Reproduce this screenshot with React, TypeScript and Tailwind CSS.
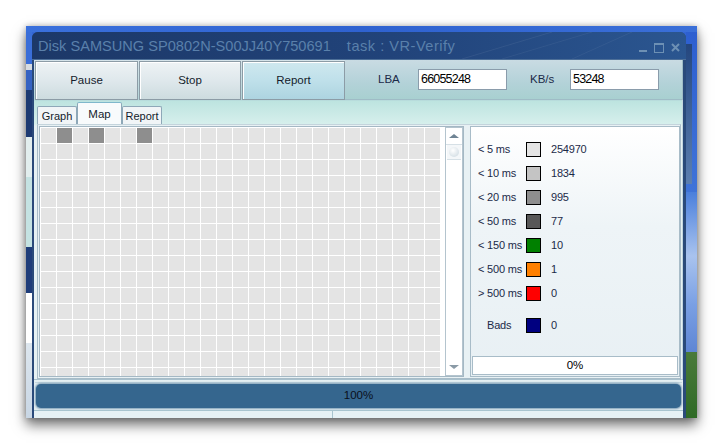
import React from "react";

const COLS = 25;
const ROWS = 16;
const DARK = new Set([1, 3, 6]);

const legend = [
  { label: "< 5 ms", color: "bg-[#e4e4e4]", value: "254970" },
  { label: "< 10 ms", color: "bg-[#c4c4c4]", value: "1834" },
  { label: "< 20 ms", color: "bg-[#8e8e8e]", value: "995" },
  { label: "< 50 ms", color: "bg-[#585858]", value: "77" },
  { label: "< 150 ms", color: "bg-[#008000]", value: "10" },
  { label: "< 500 ms", color: "bg-[#ff8000]", value: "1" },
  { label: "> 500 ms", color: "bg-[#ff0000]", value: "0" },
];

function LeftStrip() {
  return (
    <div className="flex flex-col w-[6px] shrink-0">
      <div className="h-[32px] bg-[#3a6ed8]" />
      <div className="h-[6px] bg-[#d6dce2]" />
      <div className="h-[20px] bg-[#3562c2]" />
      <div className="h-[47px] bg-[#1d3a72]" />
      <div className="h-[40px] bg-[#e2eeee]" />
      <div className="h-[70px] bg-[#c4e2e2]" />
      <div className="h-[46px] bg-[#1f3d7a]" />
      <div className="h-[15px] bg-white" />
      <div className="h-[35px] bg-white" />
      <div className="flex-1 bg-[linear-gradient(180deg,#dde6ee,#c8d6e4)]" />
    </div>
  );
}

function RightStrip() {
  return (
    <div className="flex flex-col w-[11px] shrink-0">
      <div className="h-[160px] bg-[linear-gradient(180deg,#2d5fd0,#3f73d8)] flex">
        <div className="w-[6px] mt-[12px] h-[140px] bg-[linear-gradient(180deg,#24467e,#5c7fb0)]" />
      </div>
      <div className="h-[160px] bg-[linear-gradient(180deg,#4a7fdc,#a9c3ee_40%,#7aa0e4_70%,#5f86d4)]" />
      <div className="flex-1 bg-[linear-gradient(180deg,#4a7a3a,#2f6a26)]" />
    </div>
  );
}

function Button({ label, active, w }: { label: string; active?: boolean; w: string }) {
  return (
    <div
      className={`${w} h-[39px] border border-[#8c9ca6] shadow-[inset_1px_1px_0_#ffffff] flex items-center justify-center text-[11.5px] text-[#141c2c] ${
        active
          ? "bg-[linear-gradient(180deg,#cfe8ef,#bfe0ea_50%,#add4e0)]"
          : "bg-[linear-gradient(180deg,#eef3f5,#dfe8ec_50%,#cddcdf)]"
      }`}
    >
      {label}
    </div>
  );
}

function Grid() {
  return (
    <div className="w-[404px] h-[249px] overflow-hidden bg-white pl-px pt-px">
      <div className="grid grid-cols-[repeat(25,15px)] auto-rows-[15px] gap-px">
        {Array.from({ length: COLS * ROWS }).map((_, i) => (
          <div key={i} className={i < COLS && DARK.has(i) ? "bg-[#8e8e8e]" : "bg-[#e4e4e4]"} />
        ))}
      </div>
    </div>
  );
}

function Scrollbar() {
  return (
    <div className="w-[18px] h-[249px] ml-[1px] border border-[#b4c4ce] bg-white flex flex-col">
      <div className="h-[17px] flex items-center justify-center border-b border-[#d6e0e6]">
        <div className="w-0 h-0 border-l-[5px] border-r-[5px] border-b-[4px] border-l-transparent border-r-transparent border-b-[#6f8494]" />
      </div>
      <div className="h-[15px] mx-[1px] flex items-center justify-center border-b border-[#d6e0e6] bg-[#f4f7f9]">
        <div className="w-[10px] h-[10px] rounded-full bg-[radial-gradient(circle_at_40%_35%,#ffffff,#c9d6de)]" />
      </div>
      <div className="flex-1" />
      <div className="h-[16px] flex items-center justify-center">
        <div className="w-0 h-0 border-l-[5px] border-r-[5px] border-t-[4px] border-l-transparent border-r-transparent border-t-[#8a9aa6]" />
      </div>
    </div>
  );
}

function Window() {
  return (
    <div className="w-[654px] h-[400px] shrink-0 flex flex-col rounded-t-[6px] overflow-hidden bg-[#2a4a7a]">
      {/* Title bar */}
      <div className="relative h-[28px] shrink-0 flex items-center pl-[6px] bg-[linear-gradient(90deg,#1c3868,#21437a_55%,#2b5690)] border-b border-[#4d6f98]">
        <svg className="absolute inset-0 w-full h-full" viewBox="0 0 654 28" preserveAspectRatio="none">
          <line x1="430" y1="28" x2="520" y2="0" stroke="#ffffff" strokeOpacity="0.07" strokeWidth="1" />
          <line x1="470" y1="28" x2="560" y2="0" stroke="#ffffff" strokeOpacity="0.06" strokeWidth="1" />
          <line x1="540" y1="28" x2="600" y2="0" stroke="#ffffff" strokeOpacity="0.06" strokeWidth="1" />
        </svg>
        <span className="relative text-[14.6px] text-[#5a80ab] leading-none mt-[1px]">
          Disk SAMSUNG SP0802N-S00JJ40Y750691
        </span>
        <span className="relative text-[14.6px] tracking-[0.5px] text-[#5a80ab] leading-none mt-[1px] ml-[16px]">
          task : VR-Verify
        </span>
        <div className="relative ml-auto mr-[6px] flex items-end gap-[7px] mt-[4px]">
          <div className="w-[8px] h-[2px] bg-[#6d90b4] mb-[1px]" />
          <div className="w-[10px] h-[10px] border border-[#6d90b4] border-t-2" />
          <svg width="9" height="9" viewBox="0 0 9 9" className="mb-[1px]">
            <path d="M1 1 L8 8 M8 1 L1 8" stroke="#6d90b4" strokeWidth="2" />
          </svg>
        </div>
      </div>

      {/* Body */}
      <div className="flex-1 flex ml-[2px] mr-[3px] border-r border-[#c2d6de] bg-[linear-gradient(180deg,#d6e4ea_0px,#b2d4d8_40px,#bde4e0_41px,#d6efec_64px,#e6f1f3_66px,#e6f1f3)]">
        <div className="flex-1 flex flex-col">
          {/* Toolbar */}
          <div className="h-[41px] flex pt-px pl-px shrink-0">
            <Button label="Pause" w="w-[103px]" />
            <div className="w-[1px]" />
            <Button label="Stop" w="w-[102px]" />
            <div className="w-[1px]" />
            <Button label="Report" active w="w-[103px]" />
            <div className="flex-1 h-[40px] -mt-px border-r border-b border-[#9fbcc6] flex items-center text-[11.5px] text-[#1b2a48] bg-[linear-gradient(180deg,#c9dbe3,#b3d2d8_60%,#a8d0d0)]">
              <span className="ml-[33px] w-[40px]">LBA</span>
              <div className="w-[89px] h-[21px] bg-white border border-[#8a9cab] flex items-center pl-[2px] text-[12.5px] tracking-[-0.8px] text-black">
                66055248
              </div>
              <span className="ml-[23px] w-[40px]">KB/s</span>
              <div className="w-[89px] h-[21px] bg-white border border-[#8a9cab] flex items-center pl-[2px] text-[12.5px] tracking-[-0.8px] text-black">
                53248
              </div>
            </div>
          </div>

          {/* Tabs */}
          <div className="h-[23px] flex items-end pl-[3px] shrink-0 text-[11px] text-[#141c2c]">
            <div className="w-[40px] h-[18px] border border-b-0 border-[#8ea8b8] rounded-t-[2px] bg-[#f1f5f7] flex items-center justify-center pt-px">
              Graph
            </div>
            <div className="w-[45px] h-[22px] border border-b-0 border-[#8ea8b8] border-t-[#7fb8cc] rounded-t-[2px] bg-[#f8fbfc] flex items-start justify-center pt-[3px] text-[11.5px]">
              Map
            </div>
            <div className="w-[40px] h-[18px] border border-b-0 border-[#8ea8b8] rounded-t-[2px] bg-[#f1f5f7] flex items-center justify-center pt-px">
              Report
            </div>
          </div>

          {/* Content */}
          <div className="h-[255px] shrink-0 flex ml-[3px] mr-[2px] border border-[#a8bcc8] border-t-[#c4d4dc] bg-[#e8f1f4]">
            <div className="flex ml-[1px] mt-[1px] h-[251px] border border-[#a4b8c4] bg-white">
              <Grid />
              <Scrollbar />
            </div>
            <div className="ml-[6px] mt-[1px] w-[210px] h-[251px] border border-[#a8bcc8] flex flex-col bg-[linear-gradient(180deg,#ffffff,#eef4f7_40%,#e8f0f4)]">
              <div className="flex-1 flex flex-col pt-[10px] pl-[7px] text-[11px] tracking-[-0.2px] text-[#1b2a48]">
                {legend.map((r) => (
                  <div key={r.label} className="h-[24px] flex items-center">
                    <span className="w-[48px] whitespace-nowrap">{r.label}</span>
                    <div className={`w-[15px] h-[15px] border border-black ${r.color}`} />
                    <span className="ml-[10px]">{r.value}</span>
                  </div>
                ))}
                <div className="h-[24px] mt-[8px] flex items-center">
                  <span className="w-[48px] pl-[9px] whitespace-nowrap">Bads</span>
                  <div className="w-[15px] h-[15px] border border-black bg-[#000080]" />
                  <span className="ml-[10px]">0</span>
                </div>
              </div>
              <div className="h-[19px] mx-[1px] mb-[1px] bg-white border border-[#a8bcc8] flex items-center justify-center text-[11.5px] text-black">
                0%
              </div>
            </div>
          </div>

          {/* Progress */}
          <div className="h-[31px] shrink-0 flex flex-col pt-[2px] px-[1px] border-t border-[#a8c0cc] bg-[#e4eff2]">
            <div className="h-[2px] border-t border-[#c6d8e0]" />
            <div className="h-[24px] mx-[1px] rounded-[5px] bg-[#35668e] shadow-[0_0_2px_1px_rgba(53,102,142,0.6)] flex items-center justify-center text-[11.5px] text-[#0a0f1a]">
              100%
            </div>
          </div>

          {/* Status */}
          <div className="flex-1 flex border-t border-[#a8c4ce] bg-[#e6f1f4]">
            <div className="w-[299px] border-r border-[#a8c4ce]" />
          </div>
        </div>
      </div>
    </div>
  );
}

export default function App() {
  return (
    <div
      className="w-[724px] h-[444px] bg-white overflow-hidden pt-[26px] pl-[26px]"
      style={{ fontFamily: '"Liberation Sans", Arial, sans-serif' }}
    >
      <div className="w-[671px] h-[392px] overflow-hidden flex flex-col shadow-[0_7px_12px_rgba(0,0,0,0.55),0_0_6px_rgba(0,0,0,0.25)] bg-[#3366d4]">
        <div className="h-[6px] shrink-0 bg-[linear-gradient(90deg,#3a70dc,#2f62d0_50%,#3a6fd8)]" />
        <div className="flex flex-1 min-h-0">
          <LeftStrip />
          <Window />
          <RightStrip />
        </div>
      </div>
    </div>
  );
}
